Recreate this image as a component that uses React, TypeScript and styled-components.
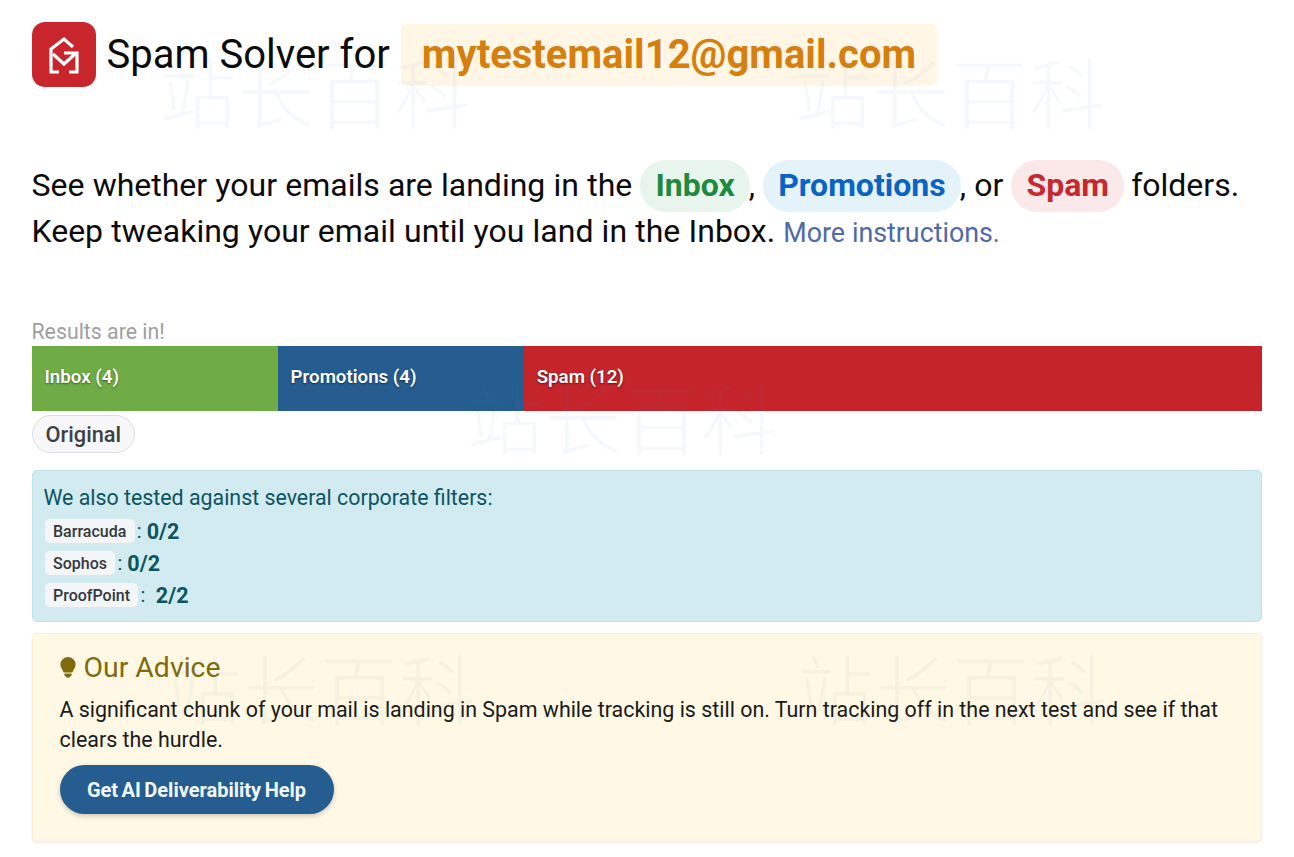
import React from 'react';
import styled, { createGlobalStyle } from 'styled-components';

const GlobalStyle = createGlobalStyle`
  html, body {
    margin: 0;
    padding: 0;
    background: #ffffff;
  }
  body {
    font-family: Roboto, "Liberation Sans", sans-serif;
    color: #0b0b0b;
  }
`;

const Page = styled.div`
  position: relative;
  width: 1294px;
  height: 857px;
  box-sizing: border-box;
  padding: 22px 32px 0 31.5px;
  overflow: hidden;
`;

const Header = styled.header`
  display: flex;
  align-items: center;
  height: 65px;
`;

const LogoBox = styled.div`
  width: 64.5px;
  height: 65px;
  border-radius: 13px;
  background: #c8252c;
  display: flex;
  align-items: center;
  justify-content: center;
  flex: none;
`;

const PageTitle = styled.h1`
  margin: 0 0 0 10.5px;
  font-size: 40px;
  font-weight: 400;
  line-height: 65px;
`;

const EmailPill = styled.span`
  margin-left: 11px;
  height: 62px;
  display: flex;
  align-items: center;
  padding: 0 21px;
  border-radius: 6px;
  background: #fff6e6;
  color: #d67f0e;
  font-size: 40px;
  font-weight: 700;
`;

const Intro = styled.p`
  margin: 75px 0 0;
  font-size: 32px;
  line-height: 46px;
  word-spacing: 0.25px;
  height: 92px;
`;

const Folder = styled.span<{ $text: string; $bg: string }>`
  display: inline-block;
  height: 52px;
  line-height: 50px;
  margin: -3px -1px -5px 0;
  padding: 0 15px;
  border-radius: 26px;
  font-weight: 700;
  color: ${(p) => p.$text};
  background: ${(p) => p.$bg};
  vertical-align: baseline;
`;

const MoreLink = styled.a`
  color: #5069a8;
  font-size: 26.8px;
  text-decoration: none;
`;

const ResultsLabel = styled.div`
  margin-top: 65px;
  height: 26px;
  font-size: 21.3px;
  line-height: 26px;
  color: #a0a0a0;
`;

const Bar = styled.div`
  display: flex;
  height: 65px;
  margin-top: 1px;
`;

const Segment = styled.div<{ $bg: string; $share: number }>`
  width: ${(p) => p.$share}%;
  box-sizing: border-box;
  display: flex;
  align-items: center;
  padding: 0 0 4px 13px;
  background: ${(p) => p.$bg};
  color: #ffffff;
  font-size: 18.7px;
  font-weight: 600;
  text-shadow: 0 1px 2px rgba(0, 0, 0, 0.5);
`;

const OriginalTag = styled.div`
  display: inline-flex;
  align-items: center;
  height: 36px;
  margin-top: 4px;
  padding: 0 13px;
  border: 1px solid #dcdde0;
  border-radius: 19px;
  background: #f7f7f9;
  color: #3c4045;
  font-size: 21.8px;
  font-weight: 500;
`;

const InfoBox = styled.section`
  margin-top: 17px;
  height: 152px;
  box-sizing: border-box;
  padding: 14px 11px 0;
  border: 1px solid #bfe3ea;
  border-radius: 5px;
  background: #d1ebf0;
  color: #0c5460;
`;

const InfoLead = styled.div`
  margin-bottom: 4px;
  font-size: 21.35px;
  line-height: 26px;
`;

const FilterRow = styled.div`
  display: flex;
  align-items: center;
  height: 32px;
  font-size: 20px;
`;

const FilterName = styled.span`
  display: inline-flex;
  align-items: center;
  height: 24px;
  margin-left: 1px;
  padding: 0 8.5px;
  border-radius: 5px;
  background: #f4f5f7;
  color: #33383d;
  font-size: 16px;
  font-weight: 500;
`;

const Colon = styled.span`
  margin-left: 2px;
`;

const FilterScore = styled.b<{ $gap: number }>`
  margin-left: ${(p) => p.$gap}px;
  font-size: 21.5px;
  font-weight: 700;
`;

const AdviceBox = styled.section`
  margin-top: 11px;
  height: 209px;
  box-sizing: border-box;
  padding: 15px 27px 0;
  border: 1px solid #fcefcf;
  border-radius: 5px;
  background: #fff8e5;
  box-shadow: 0 1px 3px rgba(0, 0, 0, 0.08);
`;

const AdviceTitle = styled.h2`
  display: flex;
  align-items: center;
  gap: 8px;
  margin: 0;
  height: 36px;
  font-size: 28.4px;
  font-weight: 400;
  color: #7f6a0c;
`;

const AdviceBody = styled.p`
  margin: 10px 0 0;
  font-size: 21.42px;
  line-height: 30px;
  color: #1a1a1a;
`;

const HelpButton = styled.button`
  display: block;
  width: 274px;
  height: 49px;
  margin-top: 10px;
  border: none;
  border-radius: 25px;
  background: #255d91;
  color: #f2f8ff;
  font-family: inherit;
  font-size: 20px;
  font-weight: 700;
  word-spacing: -1.5px;
  box-shadow: 0 2px 5px rgba(0, 0, 0, 0.2);
`;

const Watermark = styled.div<{ $x: number; $y: number }>`
  position: absolute;
  left: ${(p) => p.$x}px;
  top: ${(p) => p.$y}px;
  width: 316px;
  font-family: "Noto Sans CJK SC", sans-serif;
  font-size: 76px;
  font-weight: 300;
  line-height: 80px;
  letter-spacing: 2px;
  white-space: nowrap;
  color: rgba(90, 150, 190, 0.06);
  pointer-events: none;
`;

const marks = [
  { x: 160, y: 50 },
  { x: 795, y: 50 },
  { x: 467, y: 376 },
  { x: 165, y: 646 },
  { x: 797, y: 646 },
];

const filters = [
  { name: 'Barracuda', score: '0/2', gap: 5 },
  { name: 'Sophos', score: '0/2', gap: 5 },
  { name: 'ProofPoint', score: '2/2', gap: 10.5 },
];

const Logo = () => (
  <svg width="30" height="38" viewBox="0 0 30 38" fill="none" stroke="#fff" strokeWidth="3.2">
    <path d="M24 11 L15 3 L2 13 V36 H10" />
    <path d="M15 17 H28 V36 H20" />
    <path d="M4 18 L15 28 L26 18" />
  </svg>
);

const Bulb = () => (
  <svg width="16" height="21" viewBox="0 0 16 21" fill="#7f6a0c">
    <path d="M8 0a7.600 7.600 0 0 0-7.600 7.600c0 3.400 2.500 5 3.200 7.900h8.800c.7-2.900 3.200-4.500 3.200-7.900A7.600 7.600 0 0 0 8 0z" />
    <path d="M4.400 16.500h7.200v2l-1.600 1.200-1 1.100H7l-1-1.100-1.600-1.200z" />
  </svg>
);

export default function App() {
  return (
    <Page>
      <GlobalStyle />
      <Header>
        <LogoBox>
          <Logo />
        </LogoBox>
        <PageTitle>Spam Solver for</PageTitle>
        <EmailPill>mytestemail12@gmail.com</EmailPill>
      </Header>

      <Intro>
        See whether your emails are landing in the{' '}
        <Folder $text="#1f8a3d" $bg="#e7f5ec">Inbox</Folder>,{' '}
        <Folder $text="#0a64c2" $bg="#e4f2fa">Promotions</Folder>, or{' '}
        <Folder $text="#c5282f" $bg="#fbe8e8">Spam</Folder> folders.
        <br />
        Keep tweaking your email until you land in the Inbox.{' '}
        <MoreLink href="#">More instructions.</MoreLink>
      </Intro>

      <ResultsLabel>Results are in!</ResultsLabel>
      <Bar>
        <Segment $bg="#6fac46" $share={20}>Inbox (4)</Segment>
        <Segment $bg="#255d91" $share={20}>Promotions (4)</Segment>
        <Segment $bg="#c5242b" $share={60}>Spam (12)</Segment>
      </Bar>
      <OriginalTag>Original</OriginalTag>

      <InfoBox>
        <InfoLead>We also tested against several corporate filters:</InfoLead>
        {filters.map((f) => (
          <FilterRow key={f.name}>
            <FilterName>{f.name}</FilterName>
            <Colon>:</Colon>
            <FilterScore $gap={f.gap}>{f.score}</FilterScore>
          </FilterRow>
        ))}
      </InfoBox>

      <AdviceBox>
        <AdviceTitle>
          <Bulb />
          Our Advice
        </AdviceTitle>
        <AdviceBody>
          A significant chunk of your mail is landing in Spam while tracking is still on. Turn tracking off in the next test and see if that clears the hurdle.
        </AdviceBody>
        <HelpButton>Get AI Deliverability Help</HelpButton>
      </AdviceBox>

      {marks.map((m) => (
        <Watermark key={`${m.x}-${m.y}`} $x={m.x} $y={m.y}>站长百科</Watermark>
      ))}
    </Page>
  );
}
